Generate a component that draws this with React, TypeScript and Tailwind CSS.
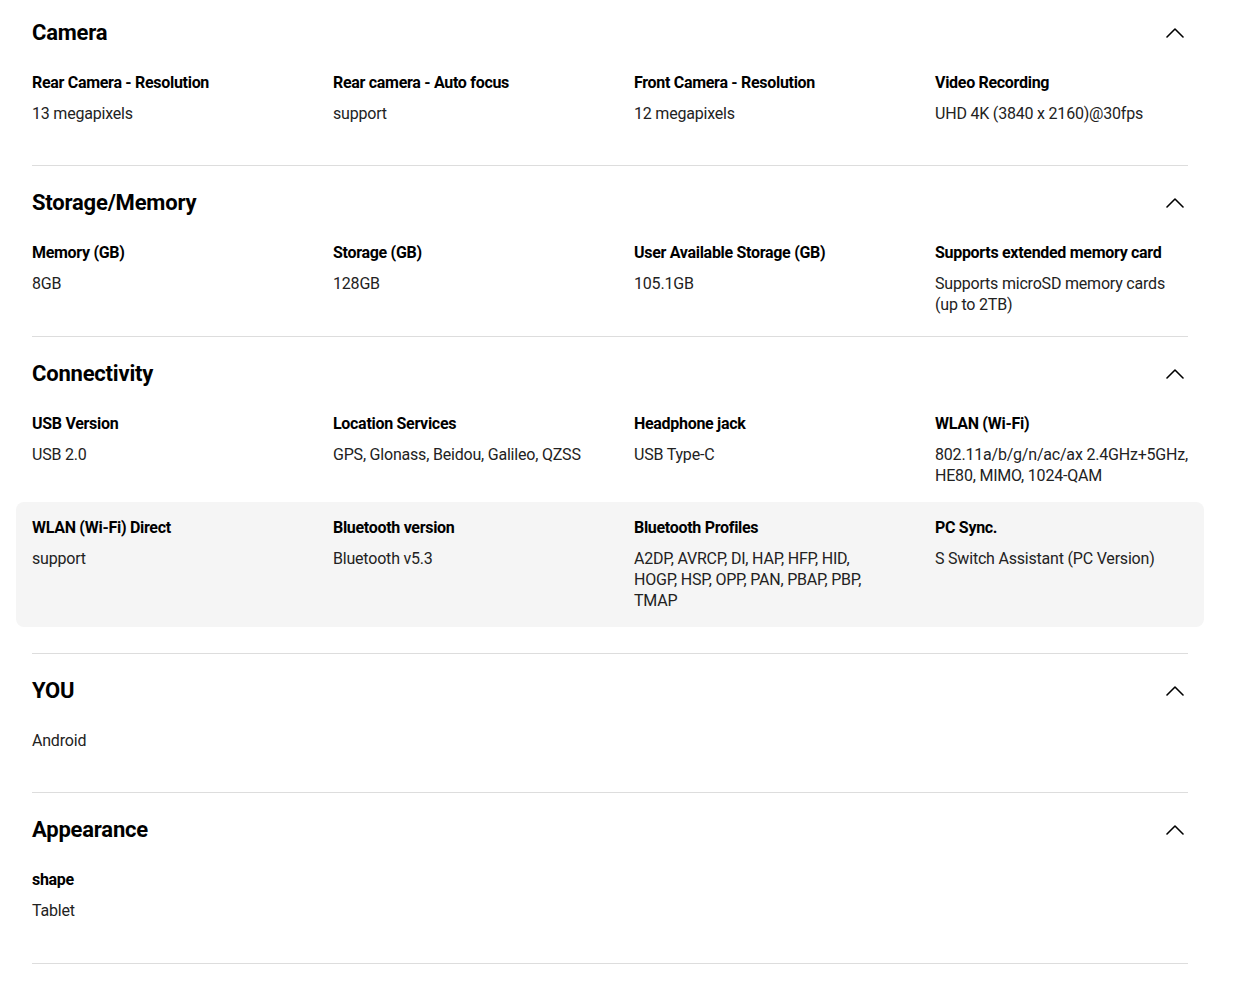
import React from "react";

type Item = { label?: string; value: string[] };
type Section = { title: string; rows: Item[][]; spacer: string; highlight?: number };

const sections: Section[] = [
  {
    title: "Camera",
    rows: [
      [
        { label: "Rear Camera - Resolution", value: ["13 megapixels"] },
        { label: "Rear camera - Auto focus", value: ["support"] },
        { label: "Front Camera - Resolution", value: ["12 megapixels"] },
        { label: "Video Recording", value: ["UHD 4K (3840 x 2160)@30fps"] },
      ],
    ],
    spacer: "h-[25px]",
  },
  {
    title: "Storage/Memory",
    rows: [
      [
        { label: "Memory (GB)", value: ["8GB"] },
        { label: "Storage (GB)", value: ["128GB"] },
        { label: "User Available Storage (GB)", value: ["105.1GB"] },
        { label: "Supports extended memory card", value: ["Supports microSD memory cards (up to 2TB)"] },
      ],
    ],
    spacer: "h-[5px]",
  },
  {
    title: "Connectivity",
    rows: [
      [
        { label: "USB Version", value: ["USB 2.0"] },
        { label: "Location Services", value: ["GPS, Glonass, Beidou, Galileo, QZSS"] },
        { label: "Headphone jack", value: ["USB Type-C"] },
        { label: "WLAN (Wi-Fi)", value: ["802.11a/b/g/n/ac/ax 2.4GHz+5GHz,", "HE80, MIMO, 1024-QAM"] },
      ],
      [
        { label: "WLAN (Wi-Fi) Direct", value: ["support"] },
        { label: "Bluetooth version", value: ["Bluetooth v5.3"] },
        { label: "Bluetooth Profiles", value: ["A2DP, AVRCP, DI, HAP, HFP, HID,", "HOGP, HSP, OPP, PAN, PBAP, PBP,", "TMAP"] },
        { label: "PC Sync.", value: ["S Switch Assistant (PC Version)"] },
      ],
    ],
    spacer: "h-[26px]",
    highlight: 1,
  },
  {
    title: "YOU",
    rows: [[{ value: ["Android"] }]],
    spacer: "h-[25px]",
  },
  {
    title: "Appearance",
    rows: [[{ label: "shape", value: ["Tablet"] }]],
    spacer: "h-[26px]",
  },
];

function Chevron() {
  return (
    <svg width="18" height="10" viewBox="0 0 18 10" fill="none" className="mr-[4px]">
      <path d="M1 9 L9 1 L17 9" stroke="#000" strokeWidth="1.6" strokeLinecap="round" strokeLinejoin="round" />
    </svg>
  );
}

export default function App() {
  return (
    <div
      className="bg-white min-h-[985px] w-[1244px] text-black"
      style={{ fontFamily: "Roboto, 'Liberation Sans', sans-serif" }}
    >
      <div className="ml-8 w-[1156px] pt-[17px]">
        {sections.map((s, si) => (
          <div key={s.title} className={si === 0 ? "" : "border-t border-[#dddddd] pt-[21px]"}>
            <div className="flex h-8 items-center justify-between">
              <h2 className="text-[22px] font-bold leading-8 tracking-[-0.2px]">{s.title}</h2>
              <Chevron />
            </div>
            <div className="mt-2">
              {s.rows.map((row, ri) => (
                <div
                  key={ri}
                  className={
                    "-mx-4 grid grid-cols-4 gap-x-12 rounded-lg px-4 py-4 " +
                    (s.highlight === ri ? "bg-[#f5f5f5]" : "")
                  }
                >
                  {row.map((it, ii) => (
                    <div key={ii}>
                      {it.label && (
                        <div className="text-[16px] font-bold leading-5 tracking-[-0.3px]">{it.label}</div>
                      )}
                      <div
                        className={
                          "text-[16px] leading-[21px] text-[#222] tracking-[-0.2px] " +
                          (it.label ? "mt-[10px]" : "-mt-[1px]")
                        }
                      >
                        {it.value.map((v, vi) => (
                          <div key={vi}>{v}</div>
                        ))}
                      </div>
                    </div>
                  ))}
                </div>
              ))}
            </div>
            <div className={s.spacer} />
          </div>
        ))}
        <div className="border-t border-[#dddddd]" />
      </div>
    </div>
  );
}
